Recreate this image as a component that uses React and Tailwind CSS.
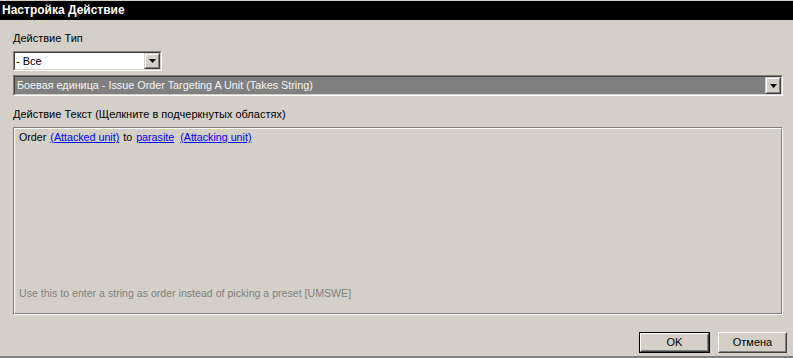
import React from 'react'

const font = { fontFamily: '"Liberation Sans", Arial, sans-serif' }

function Arrow() {
  return (
    <div className="flex h-full w-[16px] shrink-0 items-center justify-center border border-t-[#d4d0c8] border-l-[#d4d0c8] border-b-[#404040] border-r-[#404040] bg-[#d4d0c8]">
      <div className="flex h-full w-full items-center justify-center border border-t-white border-l-white border-b-[#808080] border-r-[#808080]">
        <svg width="7" height="4" viewBox="0 0 7 4">
          <path d="M0 0h7L3.5 4z" fill="#000" />
        </svg>
      </div>
    </div>
  )
}

function Combo({ className, fieldClass, children }) {
  return (
    <div className={`border border-t-[#808080] border-l-[#808080] border-b-white border-r-white ${className}`}>
      <div className={`flex h-full items-stretch border border-t-[#404040] border-l-[#404040] border-b-[#d4d0c8] border-r-[#d4d0c8] ${fieldClass}`}>
        <div className="flex flex-1 items-center overflow-hidden whitespace-nowrap pl-[1px] text-[11px]">{children}</div>
        <Arrow />
      </div>
    </div>
  )
}

function Button({ label, isDefault }) {
  const inner = (
    <div className="flex h-full w-full items-center justify-center border border-t-white border-l-white border-b-[#404040] border-r-[#404040]">
      <div className="flex h-full w-full items-center justify-center border border-t-[#d4d0c8] border-l-[#d4d0c8] border-b-[#808080] border-r-[#808080] text-[11px] text-black">
        {label}
      </div>
    </div>
  )
  if (isDefault) {
    return <div className="h-[21px] w-[71px] border border-black">{inner}</div>
  }
  return <div className="h-[21px] w-[69px]">{inner}</div>
}

function Link({ children }) {
  return <span className="text-[#0000ff] underline">{children}</span>
}

export default function App() {
  return (
    <div className="flex h-[358px] w-[793px] flex-col border-b-2 border-b-[#808080] bg-[#d4d0c8] text-black" style={font}>
      {/* Title bar */}
      <div className="mt-[1px] h-[19px] bg-black pl-[2px] text-[12px] font-bold leading-[19px] text-white">
        Настройка Действие
      </div>

      <div className="flex flex-1 flex-col pl-[13px] pr-[6px]">
        <div className="mt-[12px] text-[11px] leading-[13px]">Действие Тип</div>

        <Combo className="mt-[6px] h-[20px] w-[149px]" fieldClass="bg-white">
          - Все
        </Combo>

        <Combo className="mt-[4px] h-[21px] w-[770px]" fieldClass="bg-[#808080] text-[#f4f4f4]">
          <span className="pl-[1px] text-[10.8px]">Боевая единица - Issue Order Targeting A Unit (Takes String)</span>
        </Combo>

        <div className="mt-[12px] text-[11px] leading-[13px]">Действие Текст (Щелкните в подчеркнутых областях)</div>

        {/* Action text box */}
        <div className="mt-[6px] h-[188px] w-[770px] border border-t-[#808080] border-l-[#808080] border-b-white border-r-white">
          <div className="flex h-full flex-col border border-t-white border-l-white border-b-[#808080] border-r-[#808080] px-[4px] pb-[13px] pt-[2px] text-[10.7px] leading-[13px]">
            <div className="flex gap-[4px]">
              <span>Order</span>
              <Link>(Attacked unit)</Link>
              <span>to</span>
              <Link>parasite</Link>
              <span className="pl-[2px]"><Link>(Attacking unit)</Link></span>
            </div>
            <div className="mt-auto text-[10.6px] text-[#808080]">
              Use this to enter a string as order instead of picking a preset [UMSWE]
            </div>
          </div>
        </div>

        <div className="mt-[17px] flex justify-end gap-[8px]">
          <Button label="OK" isDefault />
          <Button label="Отмена" />
        </div>
      </div>
    </div>
  )
}
